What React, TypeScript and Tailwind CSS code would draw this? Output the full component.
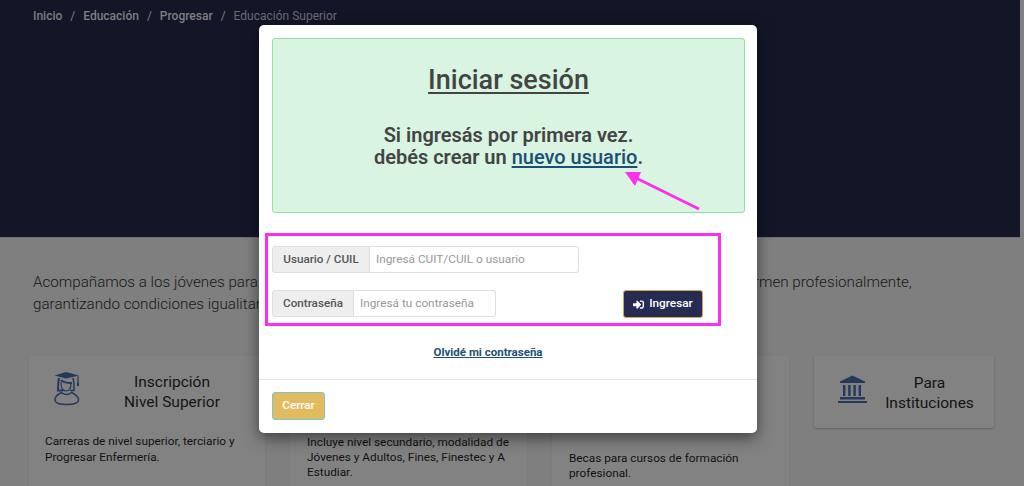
import { FaSignInAlt } from "react-icons/fa";

const crumbs = ["Inicio", "Educación", "Progresar"];

function GraduateIcon() {
  return (
    <svg width="26" height="35" viewBox="0 0 26 35" fill="none" className="shrink-0">
      <path d="M0.5 4.5 L12 1 L25 4.5 L12 7.5 Z" fill="#24395c" />
      <path d="M24 5 V12" stroke="#24395c" strokeWidth="1.2" />
      <rect x="23" y="11.5" width="2" height="3.5" fill="#24395c" />
      <path d="M5 7 C4 12 4 16 4 19.5 H9" stroke="#24395c" strokeWidth="2" />
      <path d="M19 7 C20.5 12 20 16 20 19.5 H16" stroke="#24395c" strokeWidth="1.5" />
      <path d="M7 9 C9 12 14 12 18 12" stroke="#24395c" strokeWidth="2" />
      <path d="M7 11 C7 17 9 20 12 20 C15 20 17 17 17 12" stroke="#24395c" strokeWidth="1.2" />
      <path d="M7.5 21.5 C3 23.5 1 26.5 1 29 C1 32 6 33.5 12.5 33.5 C19 33.5 24.5 32 24.5 29 C24.5 26.5 22 23.5 17.5 21.5 C14.5 24 10.5 24 7.5 21.5 Z" stroke="#24395c" strokeWidth="1.5" />
    </svg>
  );
}

function BankIcon() {
  return (
    <svg width="29" height="28" viewBox="0 0 29 28" className="shrink-0" fill="#24395c">
      <path d="M14.5 0.5 L27 6.5 V8 H2 V6.5 Z" />
      <rect x="5" y="10" width="2.4" height="11" />
      <rect x="10.2" y="10" width="2.4" height="11" />
      <rect x="15.4" y="10" width="2.4" height="11" />
      <rect x="20.6" y="10" width="2.4" height="11" />
      <rect x="2" y="22" width="25" height="2.5" />
      <rect x="0" y="26" width="29" height="2" />
    </svg>
  );
}

export default function App() {
  return (
    <div className="relative h-[486px] w-[1024px] overflow-hidden bg-[#7f7f7f] font-['Roboto',sans-serif]">
      {/* Hero */}
      <div className="h-[238px] w-[1020px] border-b border-[#6e6f75] bg-[#121627] pl-[33px] pt-[8px]">
        <nav className="flex text-[12px] leading-[16px] font-medium text-[#7f7f7f]">
          {crumbs.map((c) => (
            <span key={c} className="flex">
              {c}
              <span className="mx-[8px] font-normal">/</span>
            </span>
          ))}
          <span className="font-normal text-[#6a6b72]">Educación Superior</span>
        </nav>
      </div>

      {/* Intro */}
      <p className="whitespace-nowrap pl-[33px] pt-[34px] text-[15.2px] leading-[21.5px] font-light text-[#181818]">
        Acompañamos a los jóvenes para que puedan ingresar, continuar y finalizar sus estudios en la carrera y se formen profesionalmente,
        <br />
        garantizando condiciones igualitarias de acceso.
      </p>

      {/* Cards */}
      <div className="mt-[41px] flex items-start pl-[29px]">
        <div className="h-[140px] w-[236px] rounded-[3px] bg-[#828282] shadow-[0_1px_2px_rgba(0,0,0,0.08)]">
          <div className="flex items-start pl-[25px] pt-[15px]">
            <GraduateIcon />
            <h3 className="ml-[25px] mt-[1px] w-[134px] text-center text-[15.5px] leading-[20px] text-[#141414]">
              Inscripción
              <br />
              Nivel Superior
            </h3>
          </div>
          <p className="pl-[16px] pt-[22px] text-[11.8px] leading-[15.5px] text-[#111]">
            Carreras de nivel superior, terciario y
            <br />
            Progresar Enfermería.
          </p>
        </div>

        <div className="ml-[25px] h-[140px] w-[237px] rounded-[3px] bg-[#828282] pl-[17px] pt-[79px] shadow-[0_1px_2px_rgba(0,0,0,0.08)]">
          <p className="text-[11.8px] leading-[15px] text-[#111]">
            Incluye nivel secundario, modalidad de
            <br />
            Jóvenes y Adultos, Fines, Finestec y A
            <br />
            Estudiar.
          </p>
        </div>

        <div className="ml-[25px] h-[140px] w-[237px] rounded-[3px] bg-[#828282] pl-[17px] pt-[95px] shadow-[0_1px_2px_rgba(0,0,0,0.08)]">
          <p className="text-[11.8px] leading-[15px] text-[#111]">
            Becas para cursos de formación
            <br />
            profesional.
          </p>
        </div>

        <div className="ml-[25px] flex h-[72px] w-[180px] items-start rounded-[3px] bg-[#828282] pl-[24px] pt-[16px] shadow-[0_1px_2px_rgba(0,0,0,0.25)]">
          <div className="pt-[3px]">
            <BankIcon />
          </div>
          <h3 className="ml-[17px] mt-[1px] w-[91px] text-center text-[15.5px] leading-[20px] text-[#141414]">
            Para
            <br />
            Instituciones
          </h3>
        </div>
      </div>

      {/* Modal */}
      <div className="absolute left-[259px] top-[25px] h-[408px] w-[498px] rounded-[5px] bg-white shadow-[0_5px_15px_rgba(0,0,0,0.5)]">
        <div className="pl-[13px] pr-[12px] pt-[13px]">
          <div className="h-[175px] rounded-[3px] border border-[#8fe3a0] bg-[#d9f4e1] pt-[25px] text-center text-[#444]">
            <h2 className="text-[27px] leading-[32px] font-medium underline underline-offset-[3px]">Iniciar sesión</h2>
            <p className="mt-[28px] text-[20px] leading-[22px] font-semibold">
              Si ingresás por primera vez.
              <br />
              debés crear un{" "}
              <a className="font-medium text-[#1c4f75] underline underline-offset-[2px]">nuevo usuario</a>.
            </p>
          </div>
        </div>

        {/* Form */}
        <div className="ml-[6px] mt-[20px] h-[93px] w-[456px] border-[3px] border-[#fb2ff0] pl-[4px] pr-[15px] pt-[10px]">
          <div className="flex h-[27px] w-[307px] text-[11.8px]">
            <span className="flex w-[98px] items-center justify-center rounded-l-[3px] border border-[#dedede] bg-[#eeeeee] text-[11.7px] font-medium text-[#555]">
              Usuario / CUIL
            </span>
            <input
              className="min-w-0 flex-1 rounded-r-[3px] border border-l-0 border-[#dedede] px-[6px] placeholder:text-[#999]"
              placeholder="Ingresá CUIT/CUIL o usuario"
            />
          </div>
          <div className="mt-[17px] flex items-start justify-between">
            <div className="flex h-[27px] w-[224px] text-[11.8px]">
              <span className="flex w-[82px] items-center justify-center rounded-l-[3px] border border-[#dedede] bg-[#eeeeee] text-[11.7px] font-medium text-[#555]">
                Contraseña
              </span>
              <input
                className="min-w-0 flex-1 rounded-r-[3px] border border-l-0 border-[#dedede] px-[6px] placeholder:text-[#999]"
                placeholder="Ingresá tu contraseña"
              />
            </div>
            <button className="flex h-[28px] w-[80px] items-center justify-center gap-[5px] rounded-[3px] border border-[#d9a24c] bg-[#252b52] text-[11.8px] font-medium text-white">
              <FaSignInAlt className="h-[11px] w-[11px]" />
              Ingresar
            </button>
          </div>
        </div>

        <div className="mt-[13px] pr-[40px] text-center">
          <a className="text-[11.5px] leading-[15px] font-bold text-[#1c4f75] underline">Olvidé mi contraseña</a>
        </div>

        <div className="mt-[16px] border-t border-[#e5e5e5] px-[13px] pt-[12px]">
          <button className="h-[28px] w-[53px] rounded-[3px] border border-[#7cc8c8] bg-[#e3bb5f] text-[11.7px] font-medium text-white">
            Cerrar
          </button>
        </div>
      </div>

      {/* Annotation arrow */}
      <svg className="absolute left-[620px] top-[168px]" width="84" height="46" viewBox="0 0 84 46" fill="none">
        <path d="M79 41 L14 9" stroke="#fb2ff0" strokeWidth="3" />
        <path d="M5 4 H21 L15 18 Z" fill="#fb2ff0" />
      </svg>
    </div>
  );
}
